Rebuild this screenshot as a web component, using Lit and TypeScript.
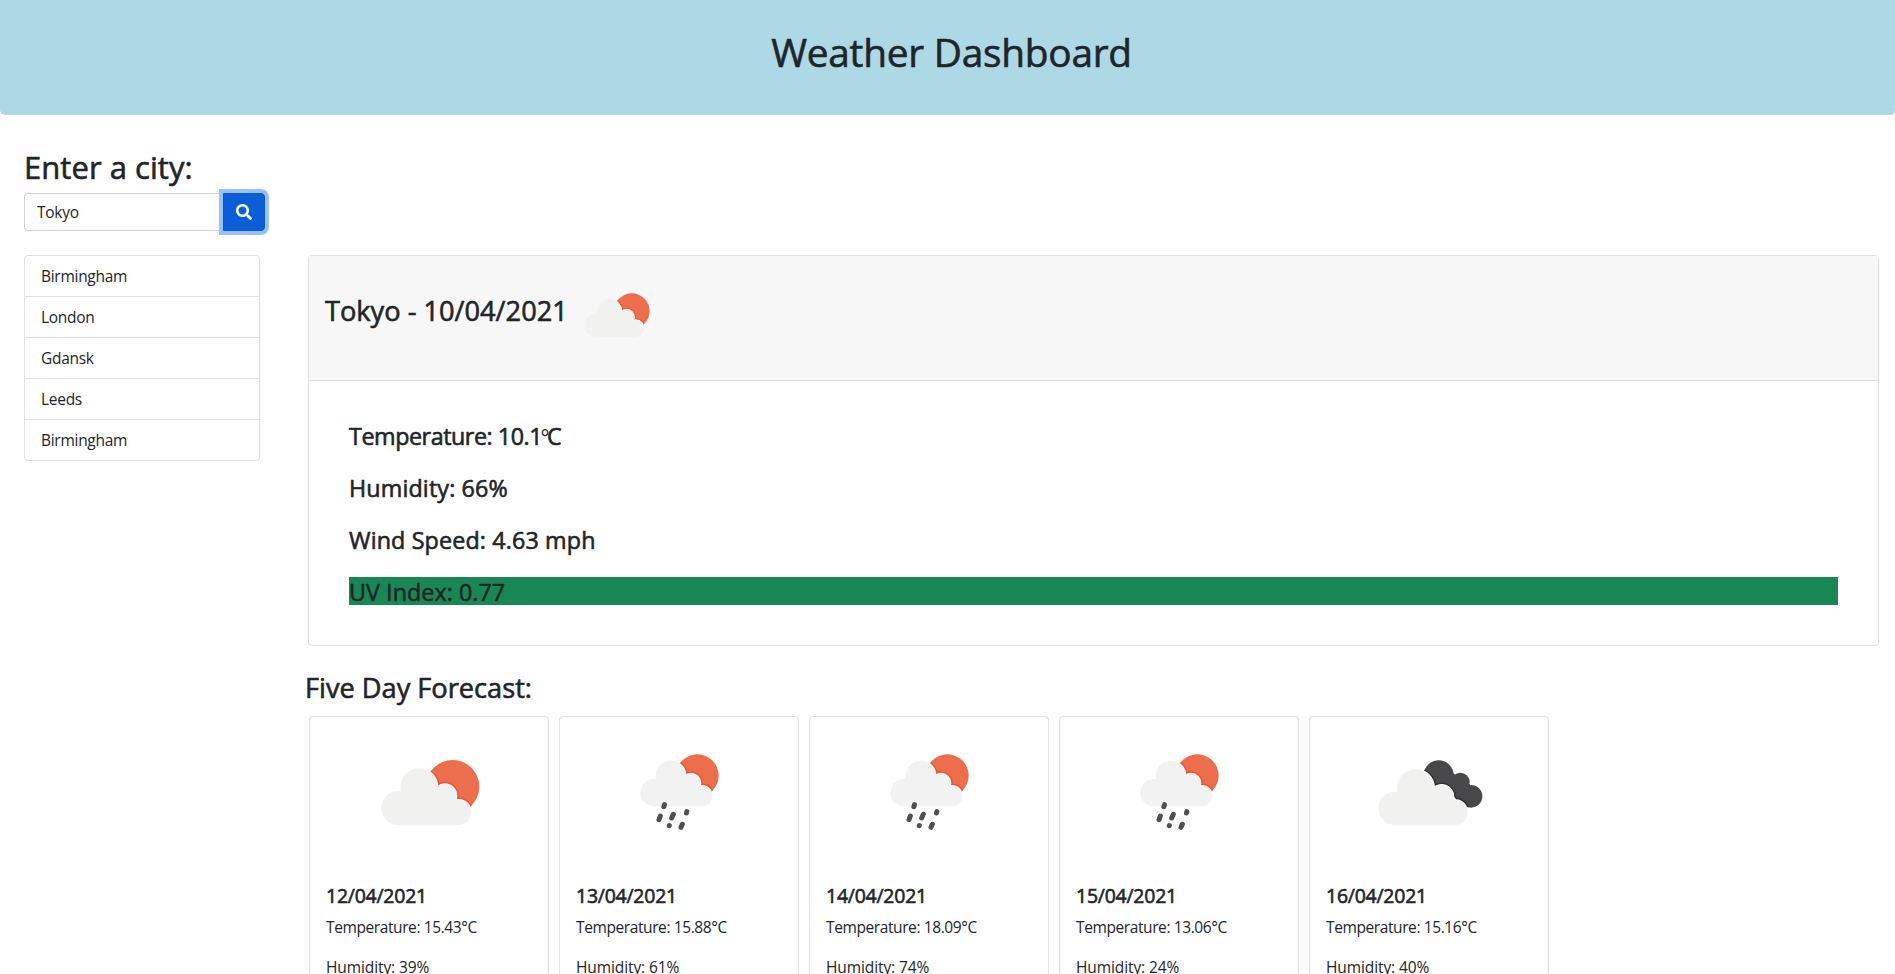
import { LitElement, html, css, svg } from "lit";
import { customElement, property } from "lit/decorators.js";

type Sky = "sun-cloud" | "rain" | "clouds";

const cloudA = svg`<circle cx="294" cy="324" r="51"/><circle cx="356" cy="261" r="56"/><circle cx="434" cy="287" r="35"/><circle cx="475" cy="337" r="38"/><path d="M294 375H475V310L434 275L356 255L294 290Z"/>`;
const cloudB = svg`<circle cx="311" cy="278" r="41"/><circle cx="361" cy="227" r="45"/><circle cx="422" cy="249" r="29"/><circle cx="455" cy="288" r="31"/><path d="M311 319H455V265L422 240L361 225L311 250Z"/>`;
const cloudC = svg`<circle cx="284" cy="325" r="50"/><circle cx="346" cy="264" r="56"/><circle cx="424" cy="290" r="36"/><circle cx="464" cy="337" r="38"/><path d="M284 375H464V310L424 275L346 255L284 290Z"/>`;

@customElement("sky-icon")
export class SkyIcon extends LitElement {
  @property() kind: Sky = "sun-cloud";
  static styles = css`
    :host { display: block; }
    svg { display: block; width: 100%; height: 100%; }
    .sun { fill: #ed6e4d; }
    .dark { fill: #48484a; }
    .cloud { fill: #f1f1f0; }
    .pale { fill: #f2f2f2; }
    .halo { fill: #f8f9fa; stroke: #f8f9fa; stroke-width: 4; }
    .burn { fill: none; stroke: #ea5630; stroke-width: 13; }
    .shade { fill: none; stroke: #303032; stroke-width: 13; }
    .drops { fill: none; stroke: #505050; stroke-width: 15; stroke-linecap: round; }
  `;
  private draw() {
    if (this.kind === "rain")
      return svg`<defs><clipPath id="c"><circle cx="441" cy="227" r="64"/></clipPath></defs>
        <circle class="sun" cx="441" cy="227" r="64"/>
        <g clip-path="url(#c)"><g class="burn">${cloudB}</g><g class="halo">${cloudB}</g></g>
        <g class="pale">${cloudB}</g>
        <path class="drops" d="M342.500 314L340.500 320M330 348L326 359M369 343L364 354M409.500 335L408.500 339M357 376.500L356.800 377M396 373L392 382"/>`;
    if (this.kind === "clouds") {
      const back = svg`<circle cx="415" cy="226" r="45"/><circle cx="480" cy="246" r="28"/><circle cx="512" cy="289" r="34"/><path d="M400 226L458 220L508 252L530 300L490 320Z"/>`;
      return svg`<defs><clipPath id="c">${back}</clipPath></defs>
        <g class="dark">${back}</g>
        <g clip-path="url(#c)"><g class="shade">${cloudC}</g><g class="halo">${cloudC}</g></g>
        <g class="cloud">${cloudC}</g>`;
    }
    return svg`<defs><clipPath id="c"><circle cx="457" cy="260" r="80"/></clipPath></defs>
      <circle class="sun" cx="457" cy="260" r="80"/>
      <g clip-path="url(#c)"><g class="burn">${cloudA}</g><g class="halo">${cloudA}</g></g>
      <g class="cloud">${cloudA}</g>`;
  }
  render() {
    return html`<svg viewBox="161 75 450 450" aria-hidden="true">${this.draw()}</svg>`;
  }
}

const cities = ["Birmingham", "London", "Gdansk", "Leeds", "Birmingham"];
const days: { date: string; kind: Sky; temp: string; hum: string }[] = [
  { date: "12/04/2021", kind: "sun-cloud", temp: "15.43", hum: "39" },
  { date: "13/04/2021", kind: "rain", temp: "15.88", hum: "61" },
  { date: "14/04/2021", kind: "rain", temp: "18.09", hum: "74" },
  { date: "15/04/2021", kind: "rain", temp: "13.06", hum: "24" },
  { date: "16/04/2021", kind: "clouds", temp: "15.16", hum: "40" },
];

@customElement("app-root")
export class AppRoot extends LitElement {
  static styles = css`
    :host {
      display: block; height: 974px; overflow: hidden; background: #fff; color: #212529;
      font: 400 15.5px/24px "Segoe UI", "Open Sans", "Noto Sans", sans-serif;
      letter-spacing: -0.018em;
    }
    * { box-sizing: border-box; }
    h1, h2, h3, h4, h5, p, ul { margin: 0; padding: 0; font-weight: 500; }
    h1, h2, h3, h4, h5 { -webkit-text-stroke: 0.6px currentColor; }
    p { font-weight: 400; }
    .banner { height: 115px; padding-top: 28px; background: #add8e6; border-radius: 0 0 5px 5px; text-align: center; padding-left: 8px; }
    h1 { font-size: 38.8px; line-height: 48px; letter-spacing: -0.24px; }
    .search { padding: 33px 0 0 24px; width: 265px; }
    h2 { font-size: 31px; line-height: 38px; margin-bottom: 7px; letter-spacing: 0.05px; }
    .group { display: flex; height: 38px; }
    input {
      flex: 1; min-width: 0; border: 1px solid #ced4da; border-right: 0; border-radius: 4px 0 0 4px;
      padding: 6px 12px; font: inherit; letter-spacing: inherit; color: inherit; background: #fff; outline: 0;
    }
    button {
      width: 42px; border: 1px solid #0a58ca; background: #0b5ed7; border-radius: 0 4px 4px 0; padding: 0;
      display: grid; place-items: center; box-shadow: 0 0 0 4px #98c1fe;
    }
    button svg { width: 16px; height: 16px; fill: #fff; display: block; }
    .main { display: flex; align-items: flex-start; padding: 24px 16px 0 24px; }
    ul { list-style: none; width: 236px; margin-right: 48px; border: 1px solid #dfdfdf; border-radius: 4px; }
    li { padding: 8px 16px; height: 41px; border-bottom: 1px solid #dfdfdf; }
    li:last-child { border-bottom: 0; height: 40px; }
    .content { flex: 1; }
    .today { height: 391px; border: 1px solid #dfdfdf; border-radius: 4px; }
    .head { display: flex; height: 125px; padding: 14px 16px 0; background: #f7f7f7; border-bottom: 1px solid #dfdfdf; }
    h3 { font-size: 27.2px; line-height: 34px; letter-spacing: 0; }
    .head h3 { margin-top: 24px; width: 241px; white-space: nowrap; }
    .head sky-icon { width: 100px; height: 100px; }
    .stats { display: grid; gap: 24px; padding: 40px; }
    h4 { font-size: 23.3px; height: 28px; line-height: 30px; letter-spacing: 0.14px; }
    .temp { letter-spacing: -0.45px; }
    .deg { font-size: 21px; letter-spacing: -2.5px; margin-left: -1.5px; -webkit-text-stroke: 0; }
    .uv { background: #198754; letter-spacing: 0.05px; }
    .five { margin: 25px 0 0 -3px; height: 45px; }
    .cards { display: flex; gap: 10px; margin-left: 1px; }
    .card { width: 240px; height: 300px; border: 1px solid #dfdfdf; border-radius: 4px; padding: 8px 16px; }
    .card sky-icon { width: 150px; height: 150px; margin: 0 auto 9px 28px; }
    h5 { font-size: 19.4px; line-height: 24px; margin-bottom: 7px; letter-spacing: -0.2px; }
    .card p { margin-bottom: 16px; }
    .card p.t { letter-spacing: -0.4px; }
    .card p.h { letter-spacing: -0.1px; }
  `;
  render() {
    return html`
      <header class="banner"><h1>Weather Dashboard</h1></header>
      <section class="search">
        <h2>Enter a city:</h2>
        <div class="group">
          <input .value=${"Tokyo"} aria-label="City" />
          <button aria-label="Search">
            <svg viewBox="0 0 512 512"><path d="M505 442.700L405.300 343c-4.500-4.500-10.600-7-17-7H372c27.600-35.300 44-79.700 44-128C416 93.100 322.900 0 208 0S0 93.100 0 208s93.100 208 208 208c48.300 0 92.700-16.400 128-44v16.300c0 6.400 2.500 12.500 7 17l99.700 99.700c9.400 9.400 24.600 9.400 33.900 0l28.300-28.300c9.400-9.400 9.400-24.600.1-34zM208 336c-70.700 0-128-57.200-128-128 0-70.700 57.200-128 128-128 70.700 0 128 57.200 128 128 0 70.700-57.200 128-128 128z"/></svg>
          </button>
        </div>
      </section>
      <div class="main">
        <ul>${cities.map((c) => html`<li>${c}</li>`)}</ul>
        <div class="content">
          <section class="today">
            <div class="head"><h3>Tokyo - 10/04/2021</h3><sky-icon></sky-icon></div>
            <div class="stats">
              <h4 class="temp">Temperature: 10.1<span class="deg">°</span>C</h4>
              <h4>Humidity: 66%</h4>
              <h4>Wind Speed: 4.63 mph</h4>
              <h4 class="uv">UV Index: 0.77</h4>
            </div>
          </section>
          <h3 class="five">Five Day Forecast:</h3>
          <div class="cards">
            ${days.map((d) => html`<article class="card">
              <sky-icon .kind=${d.kind}></sky-icon>
              <h5>${d.date}</h5>
              <p class="t">Temperature: ${d.temp}°C</p>
              <p class="h">Humidity: ${d.hum}%</p>
            </article>`)}
          </div>
        </div>
      </div>
    `;
  }
}
